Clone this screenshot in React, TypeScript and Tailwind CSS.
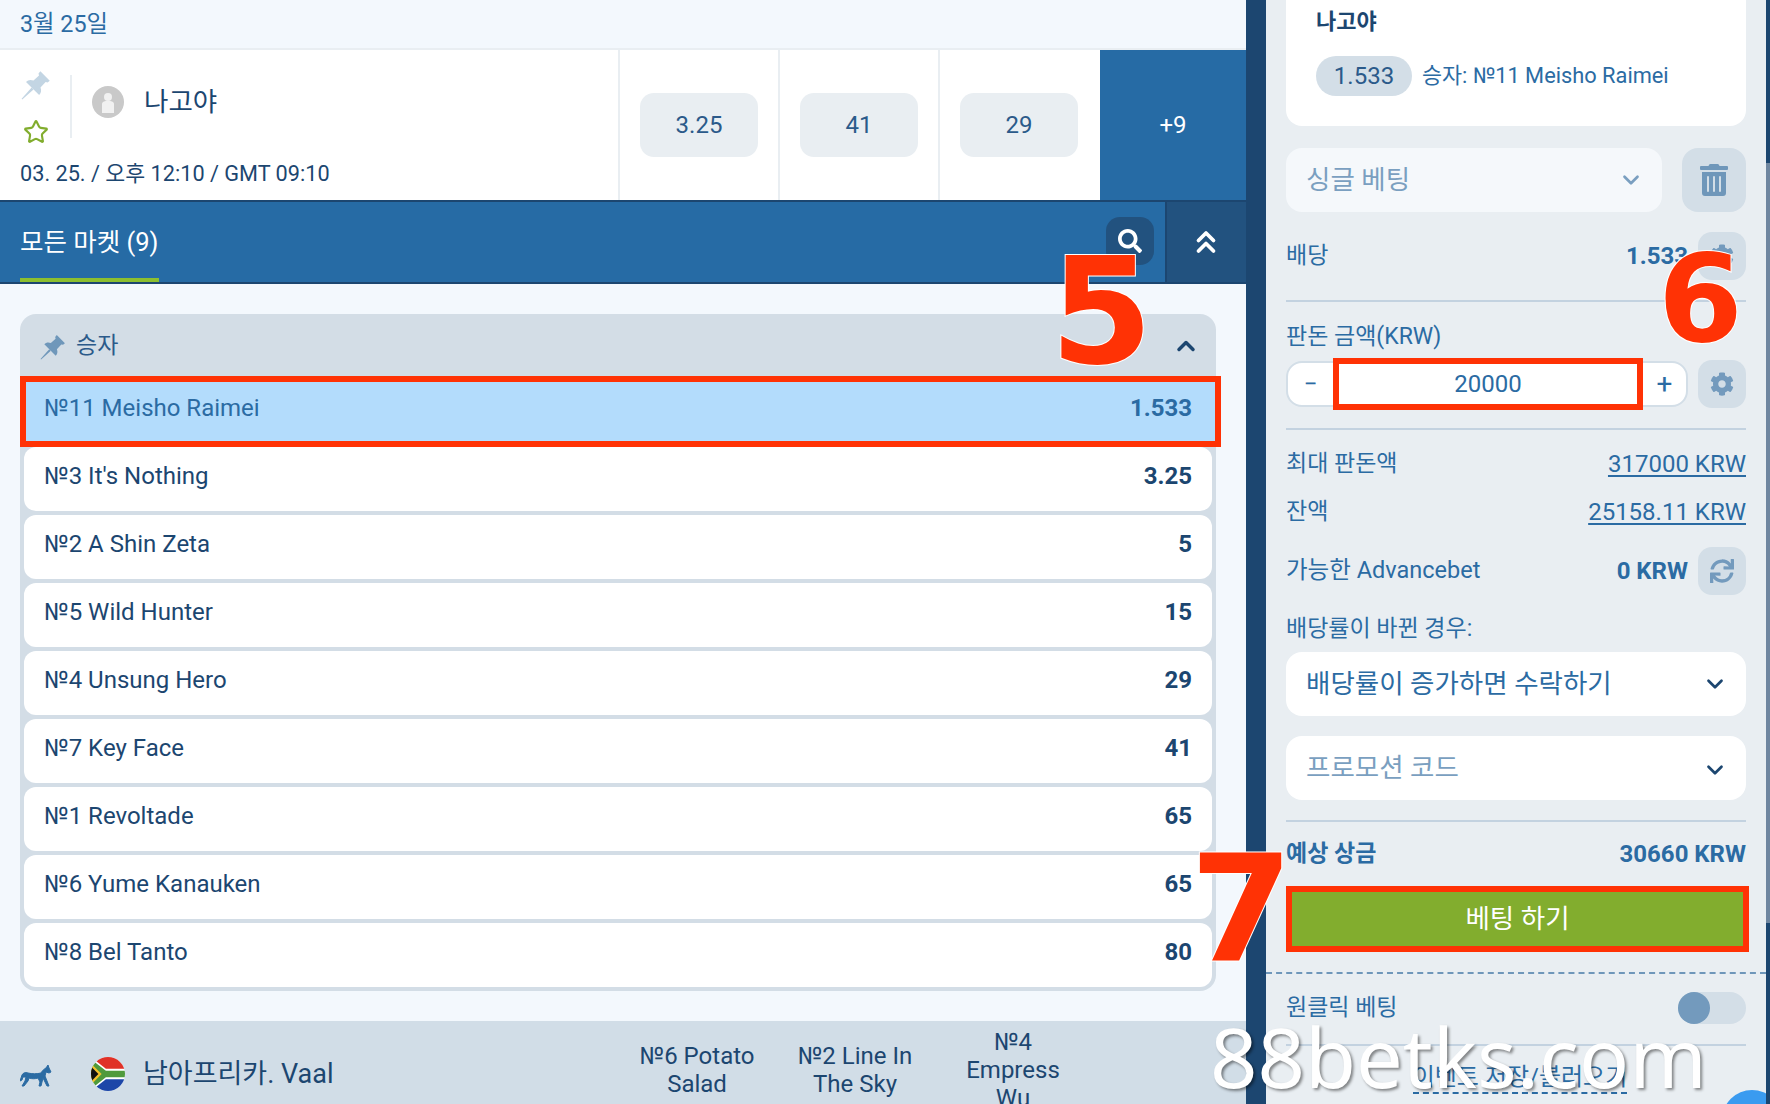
import React from "react";
import { ChevronDown, ChevronUp, ChevronsUp, Star } from "lucide-react";
import { FaCog, FaSearch, FaSync, FaTrashAlt } from "react-icons/fa";

const runners = [
  { name: "№3 It's Nothing", odd: "3.25" },
  { name: "№2 A Shin Zeta", odd: "5" },
  { name: "№5 Wild Hunter", odd: "15" },
  { name: "№4 Unsung Hero", odd: "29" },
  { name: "№7 Key Face", odd: "41" },
  { name: "№1 Revoltade", odd: "65" },
  { name: "№6 Yume Kanauken", odd: "65" },
  { name: "№8 Bel Tanto", odd: "80" },
];

const OddCell = ({ value }: { value: string }) => (
  <div className="flex w-[160px] items-center justify-center border-l-2 border-[#e9eef2]">
    <div className="flex h-[64px] w-[118px] items-center justify-center rounded-[14px] bg-[#e9eef2] text-[24px] text-[#2b5a8a]">{value}</div>
  </div>
);

const IconButton = ({ children }: { children: React.ReactNode }) => (
  <div className="flex h-[48px] w-[48px] shrink-0 items-center justify-center rounded-[14px] bg-[#d3dee7] text-[24px] text-[#739abd]">{children}</div>
);

const Pin = ({ className }: { className: string }) => (
  <svg viewBox="0 0 24 24" fill="currentColor" className={className}>
    <path d="M15.5 1L23 8.5L21.3 10L19.7 9.6L15.6 14C16.6 16.5 16 18.5 14.5 20L4 9.5C5.5 8 7.5 7.4 10 8.4L14.4 4.3L14 2.7Z" />
    <path d="M8.5 14L10 15.5L1 23.5L0.5 23Z" />
  </svg>
);

const BigNumber = ({ value, className }: { value: string; className: string }) => (
  <span className={`absolute font-['DejaVu_Sans',sans-serif] leading-none font-bold text-[#ff3205] [-webkit-text-stroke:2px_#ffffff] [paint-order:stroke_fill] ${className}`}>{value}</span>
);

const App: React.FC = (): React.ReactElement => {
  return (
    <div className="relative flex h-[1104px] w-[1770px] overflow-hidden bg-[#f3f8fd] font-['Roboto','Noto_Sans_CJK_KR',sans-serif] text-[#1c4670]">

      <div className="flex w-[1246px] shrink-0 flex-col">
        <div className="flex h-[50px] shrink-0 items-center border-b-2 border-[#e9eef2] pl-[20px] text-[23.3px] text-[#2b6ba3]">3월 25일</div>

        <div className="flex h-[152px] shrink-0 border-b-2 border-[#1c4670] bg-white">
          <div className="flex w-[618px] flex-col pl-[20px]">
            <div className="flex h-[100px] pt-[20px]">
              <div className="flex w-[32px] flex-col items-center gap-[19px]">
                <Pin className="h-[30px] w-[30px] text-[#c3d5e3]" />
                <Star size={26} strokeWidth={2} className="text-[#82ad2e]" />
              </div>
              <div className="mt-[5px] ml-[18px] h-[63px] w-[2px] bg-[#e9eef2]" />
              <svg viewBox="0 0 32 32" className="mt-[16px] ml-[20px] h-[32px] w-[32px] shrink-0 rounded-full">
                <rect width="32" height="32" fill="#c9c9c9" />
                <circle cx="16" cy="11" r="4" fill="#f1f1f1" />
                <path d="M10 27V18C10 15.5 13 15 16 15C19 15 22 15.5 22 18V27Z" fill="#f1f1f1" />
              </svg>
              <span className="mt-[12px] ml-[20px] text-[26.5px] leading-[40px]">나고야</span>
            </div>
            <div className="mt-[9px] text-[21.7px] leading-[30px]">03. 25. / 오후 12:10 / GMT 09:10</div>
          </div>
          <OddCell value="3.25" />
          <OddCell value="41" />
          <OddCell value="29" />
          <div className="ml-[2px] flex w-[146px] items-center justify-center bg-[#266ba5] text-[24px] text-white">+9</div>
        </div>

        <div className="flex h-[82px] shrink-0 border-b-2 border-[#1c4670] bg-[#266ba5] text-white">
          <div className="flex flex-1 items-center justify-between pr-[11px] pl-[20px]">
            <div className="relative flex h-full items-center text-[25.5px]">
              모든 마켓 (9)
              <div className="absolute bottom-0 left-0 h-[4px] w-[139px] bg-[#8cbf2f]" />
            </div>
            <div className="mb-[2px] flex h-[48px] w-[48px] items-center justify-center rounded-[14px] bg-[#22527f]">
              <FaSearch className="text-[24px]" />
            </div>
          </div>
          <div className="flex w-[81px] items-center justify-center border-l-2 border-[#1c4670] bg-[#22527f] pr-[2px]">
            <ChevronsUp size={36} strokeWidth={2.5} />
          </div>
        </div>

        <div className="mx-[20px] mt-[30px] w-[1196px] rounded-[16px] bg-[#d3dde6] pb-[4px]">
          <div className="flex h-[62px] items-center justify-between pr-[16px] pl-[20px]">
            <div className="mt-[3px] flex items-center gap-[10px] text-[23px] text-[#2b5a8a]">
              <Pin className="h-[26px] w-[26px] text-[#6f97ba]" />
              승자
            </div>
            <ChevronUp size={28} strokeWidth={3} className="mt-[2px]" />
          </div>
          <div className="flex h-[71px] w-[1201px] items-center justify-between border-[6px] border-[#ff3205] bg-[#b3dcfc] pr-[23px] pb-[7px] pl-[18px] text-[24px] text-[#2b6ba3]">
            <span>№11 Meisho Raimei</span>
            <span className="font-bold">1.533</span>
          </div>
          <div className="flex flex-col gap-[4px] px-[4px]">
            {runners.map((r) => (
              <div key={r.name} className="flex h-[64px] items-center justify-between rounded-[12px] bg-white pr-[20px] pb-[7px] pl-[20px] text-[24px]">
                <span>{r.name}</span>
                <span className="font-bold">{r.odd}</span>
              </div>
            ))}
          </div>
        </div>

        <div className="mt-[30px] flex h-[100px] shrink-0 items-center bg-[#d1dde7]">
          <svg viewBox="0 0 32 22" fill="#2b6ba3" stroke="#2b6ba3" strokeWidth="1" className="mt-[10px] ml-[20px] h-[22px] w-[32px] shrink-0">
            <path d="M28 0L26 3C24 4 22 6 21 8C17 9 12 9 8 8C5 7 3 8 2 10L0 16L2 15L3 12L6 12L5 16L2 21L4 21L8 16L9 13C12 14 15 14 18 13L20 17L19 21L21 21L22 17L23 13L27 21L29 21L25 11L26 7L29 8L31 7L29 3Z" />
          </svg>
          <svg viewBox="0 0 32 32" className="mt-[6px] ml-[39px] h-[34px] w-[34px] shrink-0 rounded-full">
            <rect width="32" height="32" fill="#ffffff" />
            <path d="M0 0H32V11H14Z" fill="#e03127" />
            <path d="M0 32H32V21H14Z" fill="#1c46a8" />
            <path d="M0 2L14 13H32V19H14L0 30Z" fill="#4f9a3c" />
            <path d="M0 6L10 16L0 26Z" fill="#f5c22c" />
            <path d="M0 9L7 16L0 23Z" fill="#111111" />
          </svg>
          <span className="mt-[6px] ml-[18px] w-[475px] shrink-0 text-[27px]">남아프리카. Vaal</span>
          <div className="-mt-[2px] w-[158px] text-center text-[24px] leading-[28px]">№6 Potato<br />Salad</div>
          <div className="-mt-[2px] w-[158px] text-center text-[24px] leading-[28px]">№2 Line In<br />The Sky</div>
          <div className="-mt-[2px] w-[158px] text-center text-[24px] leading-[28px]">№4<br />Empress<br />Wu</div>
        </div>
      </div>

      <div className="w-[20px] shrink-0 bg-[#1c4670]" />

      <div className="relative flex w-[500px] shrink-0 flex-col overflow-hidden bg-[#e9eef2] text-[#2b6ba3]">
        <div className="mx-[20px] flex flex-col">
          <div className="h-[126px] rounded-b-[16px] bg-white pl-[30px]">
            <div className="pt-[7px] text-[22px] leading-[30px] font-bold text-[#1c4670]">나고야</div>
            <div className="mt-[19px] flex items-center gap-[10px]">
              <span className="flex h-[40px] w-[96px] items-center justify-center rounded-full bg-[#d3dee7] text-[24px] text-[#2b5a8a]">1.533</span>
              <span className="text-[21.8px]">승자: №11 Meisho Raimei</span>
            </div>
          </div>

          <div className="mt-[22px] flex gap-[20px]">
            <div className="flex h-[64px] flex-1 items-center justify-between rounded-[16px] bg-[#f5f8fb] pr-[18px] pl-[20px] text-[26.5px] text-[#7a9fc0]">
              싱글 베팅
              <ChevronDown size={26} strokeWidth={2.5} />
            </div>
            <div className="flex h-[64px] w-[64px] items-center justify-center rounded-[16px] bg-[#d3dee7] text-[#6f97ba]">
              <FaTrashAlt className="text-[32px]" />
            </div>
          </div>

          <div className="mt-[20px] flex h-[48px] items-center justify-between text-[23px]">
            <span>배당</span>
            <div className="flex items-center gap-[10px]">
              <span className="text-[24px] font-bold">1.533</span>
              <IconButton><FaCog /></IconButton>
            </div>
          </div>

          <div className="mt-[20px] h-[2px] bg-[#c3d2e0]" />
          <div className="mt-[21px] text-[23px] leading-[28px]">판돈 금액(KRW)</div>

          <div className="mt-[9px] flex items-center gap-[10px]">
            <div className="flex h-[46px] w-[402px] items-center rounded-[16px] border-2 border-[#d3dee7] bg-white">
              <span className="w-[45px] text-center text-[24px]">−</span>
              <div className="z-10 -my-[5px] flex h-[52px] w-[310px] shrink-0 items-center justify-center border-[6px] border-[#ff3205] bg-white text-[24px]">20000</div>
              <span className="flex-1 text-center text-[28px]">+</span>
            </div>
            <IconButton><FaCog /></IconButton>
          </div>

          <div className="mt-[20px] h-[2px] bg-[#c3d2e0]" />
          <div className="mt-[20px] flex items-center justify-between text-[23px] leading-[28px]">
            <span>최대 판돈액</span>
            <span className="text-[24px] underline underline-offset-[3px]">317000 KRW</span>
          </div>
          <div className="mt-[20px] flex items-center justify-between text-[23px] leading-[28px]">
            <span>잔액</span>
            <span className="text-[24px] underline underline-offset-[3px]">25158.11 KRW</span>
          </div>
          <div className="mt-[21px] flex h-[48px] items-center justify-between">
            <span className="text-[23.5px]">가능한 Advancebet</span>
            <div className="flex items-center gap-[10px]">
              <span className="text-[24px] font-bold">0 KRW</span>
              <IconButton><FaSync /></IconButton>
            </div>
          </div>
          <div className="mt-[20px] text-[23px] leading-[28px]">배당률이 바뀐 경우:</div>
          <div className="mt-[9px] flex h-[64px] items-center justify-between rounded-[16px] bg-white pr-[18px] pl-[20px] text-[26.5px]">
            배당률이 증가하면 수락하기
            <ChevronDown size={26} strokeWidth={2.5} className="text-[#1c4670]" />
          </div>
          <div className="mt-[20px] flex h-[64px] items-center justify-between rounded-[16px] bg-white pr-[18px] pl-[20px] text-[26.5px] text-[#7a9fc0]">
            <span>프로모션 코드</span>
            <ChevronDown size={26} strokeWidth={2.5} className="mt-[4px] text-[#1c4670]" />
          </div>
          <div className="mt-[20px] h-[2px] bg-[#c3d2e0]" />
          <div className="mt-[18px] flex items-center justify-between text-[24px] leading-[28px] font-bold">
            <span className="text-[23px]">예상 상금</span>
            <span>30660 KRW</span>
          </div>
          <div className="mt-[18px] flex h-[66px] w-[463px] items-center justify-center border-[6px] border-[#ff3205] bg-[#82ad2e] text-[26.5px] text-white">베팅 하기</div>
        </div>

        <div className="mt-[20px] h-0 border-t-2 border-dashed border-[#6f97ba]" />

        <div className="mx-[20px] flex flex-col">
          <div className="mt-[17px] flex items-center justify-between text-[23px]">
            <span>원클릭 베팅</span>
            <div className="flex h-[32px] w-[68px] rounded-full bg-[#d3dee7]">
              <div className="h-[32px] w-[32px] rounded-full bg-[#739abd]" />
            </div>
          </div>
          <div className="mt-[18px] h-[2px] bg-[#c3d2e0]" />
          <div className="mx-auto mt-[16px] translate-x-[4px] border-b-2 border-dashed border-[#2b6ba3] text-[24px] leading-[30px]">이벤트 저장/불러오기</div>
        </div>

        <div className="absolute top-[1090px] left-[456px] h-[60px] w-[60px] rounded-full bg-[#3a9bf0]" />
      </div>

      <div className="flex w-[4px] shrink-0 flex-col bg-[#1c4670]">
        <div className="mt-[163px] h-[760px] bg-[#6f86a0]" />
      </div>

      <BigNumber value="5" className="top-[238px] left-[1050px] text-[148px]" />
      <BigNumber value="6" className="top-[238px] left-[1658px] text-[122px]" />
      <BigNumber value="7" className="top-[836px] left-[1190px] text-[148px]" />
      <span className="absolute top-[1001px] left-[1210px] font-['Noto_Sans',sans-serif] text-[83px] leading-[110px] font-normal text-white [text-shadow:2px_2px_3px_rgba(0,0,0,0.45)]">88betks.com</span>
    </div>
  );
};

export default App;
